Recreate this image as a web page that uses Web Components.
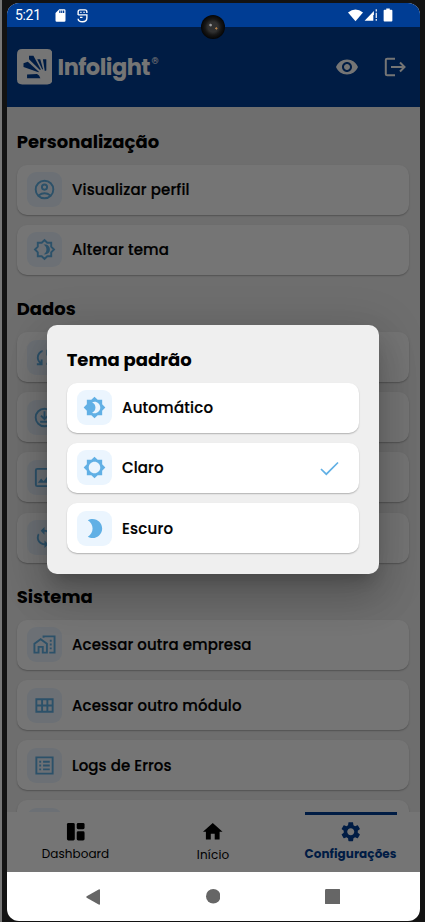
<!DOCTYPE html>
<html lang="pt-BR">
<head>
<meta charset="utf-8">
<title>Infolight</title>
<style>
body{margin:0;background:#131313;font-family:Poppins,Inter,"Open Sans",sans-serif;font-feature-settings:"cv11";color:#000}
</style>
</head>
<body>
<settings-screen></settings-screen>
<script>
const STAR='M20 8.69V4h-4.69L12 .69 8.69 4H4v4.69L.69 12 4 15.31V20h4.69L12 23.31 15.31 20H20v-4.69L23.31 12 20 8.69z';
const p=d=>`<path d="${d}"/>`;
const ICONS={
eye:p('M12 4.5C7 4.5 2.73 7.61 1 12c1.73 4.39 6 7.5 11 7.5s9.27-3.11 11-7.5c-1.73-4.39-6-7.5-11-7.5zM12 17c-2.76 0-5-2.24-5-5s2.24-5 5-5 5 2.24 5 5-2.24 5-5 5zm0-8c-1.66 0-3 1.34-3 3s1.34 3 3 3 3-1.34 3-3-1.34-3-3-3z'),
logout:'<path fill="none" stroke="currentColor" stroke-width="2" d="M12 3.8H4.2Q2.8 3.8 2.8 5v14q0 1.2 1.4 1.2H12M8 12h13M17 7.500l4.500 4.500-4.500 4.500"/>',
person:'<g fill="none" stroke="currentColor" stroke-width="2"><circle cx="12" cy="12" r="9.200"/><circle cx="12" cy="9.500" r="2.700"/><path d="M5.800 18.200q6.200-4.400 12.400 0"/></g>',
theme:`<path fill="none" stroke="currentColor" stroke-width="2" d="M19 9.100V5h-4.100L12 2.100 9.100 5H5v4.100L2.100 12 5 14.900V19h4.100l2.900 2.900 2.900-2.900H19v-4.100l2.900-2.900z"/>`+p('M11 7c2.100 1 3 2.800 3 5s-.9 4-3 5c4 .7 6.600-1.700 6.600-5S15 6.300 11 7z'),
auto:p(STAR+'M12 18c-.89 0-1.74-.2-2.500-.55C11.560 16.500 13 14.420 13 12s-1.440-4.500-3.500-5.450C10.260 6.200 11.110 6 12 6c3.310 0 6 2.690 6 6s-2.690 6-6 6z'),
light:p(STAR+'M12 18c-3.310 0-6-2.690-6-6s2.690-6 6-6 6 2.690 6 6-2.690 6-6 6z'),
dark:p('M10 2c-1.820 0-3.530.5-5 1.350C7.990 5.080 10 8.300 10 12s-2.010 6.920-5 8.650C6.470 21.500 8.180 22 10 22c5.520 0 10-4.480 10-10S15.520 2 10 2z'),
sync:p('M4 20v-2h2.750l-.4-.35q-1.225-1.225-1.788-2.662T4 12.050q0-2.775 1.663-4.937T10 4.250v2.100Q8.200 7 7.100 8.563T6 12.050q0 1.125.425 2.188T7.750 16.200l.25.25V14h2v6H4Zm10-.25v-2.100q1.800-.65 2.900-2.212T18 11.950q0-1.125-.425-2.187T16.250 7.800L16 7.550V10h-2V4h6v2h-2.750l.4.35q1.225 1.225 1.788 2.663T20 11.950q0 2.775-1.662 4.938T14 19.750Z'),
download:'<g fill="none" stroke="currentColor" stroke-width="2"><circle cx="12" cy="12" r="9.200"/><path d="M12 5.500v7.500M8.300 10l3.700 3.700 3.700-3.700M7.500 16.500h9"/></g>',
image:'<rect x="3" y="3" width="18" height="18" rx="1.500" fill="none" stroke="currentColor" stroke-width="2"/>'+p('M8.500 13l2.500 3 3.500-4.500 4.500 6H5z'),
loop:p('M12 4V1L8 5l4 4V6c3.310 0 6 2.690 6 6 0 1.010-.25 1.970-.7 2.800l1.460 1.460C19.540 15.030 20 13.570 20 12c0-4.420-3.580-8-8-8zm0 14c-3.310 0-6-2.690-6-6 0-1.010.25-1.970.7-2.800L5.240 7.740C4.460 8.970 4 10.430 4 12c0 4.420 3.580 8 8 8v3l4-4-4-4v3z'),
company:'<path fill="none" stroke="currentColor" stroke-width="2" d="M1.500 20.500v-9.200L8 6.500l6.500 4.800v9.200h-4.300v-6H5.800v6zM11 5V3.500h11.500v17H17"/>'+p('M17.500 7h2v2h-2zm0 4h2v2h-2zm0 4h2v2h-2z'),
module:p('M2.500 4.500h19v15h-19zm2 2v4.500h4V6.500zm6 0v4.500h3.500V6.500zm5.500 0v4.500h3.500V6.500zM4.500 13v4.500h4V13zm6 0v4.500h3.500V13zm5.500 0v4.500h3.500V13z'),
logs:p('M2.500 2.500h19v19h-19zm2 2v15h15v-15zM6.500 7h2v2h-2zm0 4h2v2h-2zm0 4h2v2h-2zM10.500 7h7v2h-7zm0 4h7v2h-7zm0 4h7v2h-7z'),
dashboard:'<rect x="3" y="3" width="8" height="18" rx="1.500"/><rect x="13" y="3" width="8" height="6.500" rx="1.500"/><rect x="13" y="11.500" width="8" height="9.500" rx="1.500"/>',
home:p('M10 20v-6h4v6h5v-8h3L12 3 2 12h3v8z'),
gear:p('M19.140 12.940c.04-.3.060-.61.060-.94 0-.32-.02-.64-.07-.94l2.030-1.580c.18-.14.230-.41.120-.61l-1.920-3.320c-.12-.22-.37-.29-.59-.22l-2.390.96c-.5-.38-1.030-.7-1.620-.94l-.36-2.540c-.04-.24-.24-.41-.48-.41h-3.840c-.24 0-.43.17-.47.41l-.36 2.540c-.59.24-1.130.57-1.620.94l-2.390-.96c-.22-.08-.47 0-.59.22L2.740 8.870c-.12.21-.08.47.12.61l2.030 1.580c-.05.3-.09.63-.09.94s.02.64.07.94l-2.030 1.580c-.18.14-.23.41-.12.61l1.920 3.320c.12.22.37.29.59.22l2.390-.96c.5.38 1.030.7 1.620.94l.36 2.540c.05.24.24.41.48.41h3.840c.24 0 .44-.17.47-.41l.36-2.540c.59-.24 1.130-.56 1.620-.94l2.390.96c.22.08.47 0 .59-.22l1.920-3.320c.12-.22.07-.47-.12-.61l-2.010-1.580zM12 15.600c-1.980 0-3.600-1.620-3.600-3.600s1.620-3.600 3.600-3.600 3.600 1.620 3.600 3.600-1.620 3.600-3.600 3.600z'),
check:'<path fill="none" stroke="currentColor" stroke-width="1.700" d="M4 13l5.300 5.200L21 6.500"/>',
logo:`<path fill="#fff" d="M3.500 0h17Q24 0 24 3.500v17q0 3.500-3.500 3.500h-17Q0 24 0 20.500v-17Q0 0 3.500 0z"/><g fill="#003d94"><path d="M8.100 4.600h3l5 9.300-.6.300L8.100 6.900z"/><path d="M4.400 9.600l2.900-1 7.500 6.700-.3.500L4.400 12.200z"/><path d="M6.800 17.300l6.700-.4q1.700.5 2.300 2.800H6.800z"/><path d="M13.700 6.900h2l1.900 6.700-.5.200z"/><path d="M17.500 6.900h2.300v7.700l-1 .2z"/></g>`,
sd:p('M18 2h-8L4 8v12q0 2 2 2h12q2 0 2-2V4q0-2-2-2zm-6 6h-2V4h2zm3 0h-2V4h2zm3 0h-2V4h2z'),
bug:'<g fill="none" stroke="currentColor" stroke-width="2.200"><path d="M5 11V6q0-3 3-3h8q3 0 3 3v2M5 11h14v5q0 6-7 6t-7-5M8.500 7h2M13.500 7h2M8 15h4"/></g>',
wifi:p('M12 21L0 7Q12-2 24 7z'),
signal:p('M1 22L17 5v7h-1v10zM20 2h2v4h-2zm0 6h2v9h-2zm0 11h2v3h-2z'),
battery:p('M9 1h6v2h3q1.500 0 1.500 1.500v17q0 1.500-1.500 1.500H6q-1.500 0-1.500-1.500v-17Q4.500 3 6 3h3z'),
back:p('M22.500 1.500v21q0 1.500-2 .8L2.500 13q-1.500-1 0-2l18-10.300q2-.7 2 .8z'),
circle:'<circle cx="12" cy="12" r="12"/>',
square:'<rect width="24" height="24" rx="2"/>'
};
const define=(name,render)=>customElements.define(name,class extends HTMLElement{
  connectedCallback(){
    if(this.shadowRoot)return;
    this.attachShadow({mode:'open'}).innerHTML=render(this);
  }
});
define('ui-icon',e=>{const s=e.getAttribute('size')||23;return `<style>:host{display:block;flex:none;width:${s}px;height:${s}px}svg{display:block;width:100%;height:100%;fill:currentColor}</style><svg viewBox="0 0 24 24" preserveAspectRatio="none" fill-rule="evenodd">${ICONS[e.getAttribute('name')]||''}</svg>`});
/* Text whose tracking is adjusted so that the run has a given width. */
customElements.define('fit-text',class extends HTMLElement{
  connectedCallback(){
    if(this.shadowRoot)return;
    this.attachShadow({mode:'open'}).innerHTML='<style>:host{display:block;white-space:nowrap}span{display:inline-block}</style><span></span>';
    const s=this.shadowRoot.querySelector('span'),t=this.getAttribute('text');
    s.textContent=t;
    const w=+this.getAttribute('width'),n=s.getBoundingClientRect().width;
    s.style.letterSpacing=(w-n)/(t.length-1)+'px';
    s.style.marginRight=-(w-n)/(t.length-1)+'px';
  }
});
define('menu-item',e=>`<style>
:host{display:flex;align-items:center;box-sizing:border-box;height:50px;padding:0 18px 0 10px;border-radius:10px;background:#fff;box-shadow:0 1px 1.500px rgba(0,0,0,.26);flex:none}
.tile{display:grid;place-items:center;width:35px;height:35px;border-radius:9px;background:#ebf5fe;color:#61b0e5;margin-right:10.300px}
fit-text{font-size:15px;font-weight:500;line-height:20px;flex:1;padding-top:1px;-webkit-text-stroke:.2px currentColor}
.end{color:#61b0e5}
</style><div class="tile"><ui-icon name="${e.getAttribute('icon')}"></ui-icon></div>${e.getAttribute('label')?`<fit-text text="${e.getAttribute('label')}" width="${e.getAttribute('w')}"></fit-text>`:''}<div class="end"><slot></slot></div>`);
define('menu-section',e=>`<style>
:host{display:flex;flex-direction:column;gap:10.200px}
fit-text{font-size:18px;font-weight:700;line-height:24px;padding-top:1px;margin-bottom:.5px}
</style><fit-text text="${e.getAttribute('label')}" width="${e.getAttribute('w')}"></fit-text><slot></slot>`);
define('nav-tab',e=>`<style>
:host{display:flex;flex-direction:column;align-items:center;width:92px;box-sizing:border-box;height:60px;border-top:3px solid transparent;padding-top:5px;font-size:12px;line-height:18px}
:host([active]){border-color:#003d94;color:#003d94;font-weight:700}
fit-text{margin-top:1px}
</style><ui-icon name="${e.getAttribute('icon')}" size="23.500"></ui-icon><fit-text text="${e.getAttribute('label')}" width="${e.getAttribute('w')}"></fit-text>`);
define('status-bar',()=>`<style>
:host{display:flex;align-items:center;height:24px;padding:0 25.500px 0 8px;background:#003d94;color:#fff;font:400 14px Roboto,sans-serif}
fit-text{margin-right:12px}.gap{flex:1}
</style><fit-text text="5:21" width="26"></fit-text><ui-icon name="sd" size="15"></ui-icon><ui-icon name="bug" size="15" style="margin-left:6.500px"></ui-icon><span class="gap"></span><ui-icon name="wifi" size="15"></ui-icon><ui-icon name="signal" size="14" style="margin-left:1px"></ui-icon><ui-icon name="battery" size="14" style="margin-left:3px"></ui-icon>`);
define('app-header',()=>`<style>
:host{display:flex;align-items:center;height:80px;box-sizing:border-box;padding:0 13px 0 9.500px;background:#003d94;color:#fff}
.name{font-size:22.500px;font-weight:700;margin-left:5.500px;line-height:30px}
.r{font-size:9px;line-height:10px;align-self:flex-start;margin:29px 0 0 1px;font-family:Roboto,sans-serif}
.gap{flex:1}
</style><ui-icon name="logo" size="35.500"></ui-icon><fit-text class="name" text="Infolight" width="93"></fit-text><span class="r">®</span><span class="gap"></span><ui-icon name="eye" size="24"></ui-icon><ui-icon name="logout" size="24" style="margin-left:24px"></ui-icon>`);
define('theme-dialog',()=>`<style>
:host{display:flex;flex-direction:column;box-sizing:border-box;width:332.500px;height:248.500px;padding:22px 20px 20px;border-radius:10px;background:#efefef;box-shadow:0 11px 15px -7px rgba(0,0,0,.2),0 24px 38px 3px rgba(0,0,0,.14),0 9px 46px 8px rgba(0,0,0,.12)}
</style><menu-section label="Tema padrão" w="125">
<menu-item icon="auto" label="Automático" w="91"></menu-item>
<menu-item icon="light" label="Claro" w="41.500"><ui-icon name="check" size="24"></ui-icon></menu-item>
<menu-item icon="dark" label="Escuro" w="51"></menu-item></menu-section>`);
define('settings-screen',()=>`<style>
:host{display:block;box-sizing:border-box;width:425px;height:922px;padding:3px 5px 1px 5px;border-left:2px solid #777;background:#131313;position:relative;overflow:hidden}
.screen{height:918px;border-radius:12px;overflow:hidden;display:flex;flex-direction:column;background:#fff}
.app{position:relative;height:845px;display:flex;flex-direction:column;background:#efefef;flex:none}
.list{height:705px;box-sizing:border-box;padding:22px 11.500px 0 9.700px;overflow:hidden;display:flex;flex-direction:column;gap:21.500px}
.tabs{display:flex;justify-content:space-between;height:60px;padding:0 23.500px 0 22.500px;background:#fff}
.scrim{position:absolute;inset:0;background:rgba(0,0,0,.54)}
theme-dialog{position:absolute;left:39.700px;top:298px}
.nav{flex:1;display:flex;align-items:center;justify-content:space-between;padding:0 80px 0 78px;color:#666}
.cam{position:absolute;left:199px;top:15px;width:24px;height:24px;border-radius:50%;background:radial-gradient(circle at 40% 42%,#999 0 .8px,transparent 1.800px),radial-gradient(circle at 64% 56%,#b68045 0 .8px,transparent 1.400px),radial-gradient(circle,#303030 0 5px,#171717 8px,#050505 12px)}
</style><div class="screen"><status-bar></status-bar><div class="app"><app-header></app-header><div class="list">
<menu-section label="Personalização" w="142.500"><menu-item icon="person" label="Visualizar perfil" w="117.500"></menu-item><menu-item icon="theme" label="Alterar tema" w="97"></menu-item></menu-section>
<menu-section label="Dados" w="59"><menu-item icon="sync"></menu-item><menu-item icon="download"></menu-item><menu-item icon="image"></menu-item><menu-item icon="loop"></menu-item></menu-section>
<menu-section label="Sistema" w="76"><menu-item icon="company" label="Acessar outra empresa" w="179.500"></menu-item><menu-item icon="module" label="Acessar outro módulo" w="169.500"></menu-item><menu-item icon="logs" label="Logs de Erros" w="99.500"></menu-item><menu-item icon="list"></menu-item></menu-section>
</div><div class="tabs"><nav-tab icon="dashboard" label="Dashboard" w="67.500"></nav-tab><nav-tab icon="home" label="Início" w="32.500" style="line-height:20px"></nav-tab><nav-tab active icon="gear" label="Configurações" w="92"></nav-tab></div>
<div class="scrim"></div><theme-dialog></theme-dialog></div>
<div class="nav"><ui-icon name="back" size="16"></ui-icon><ui-icon name="circle" size="14.500"></ui-icon><ui-icon name="square" size="15.500"></ui-icon></div></div><div class="cam"></div>`);
</script>
</body>
</html>
